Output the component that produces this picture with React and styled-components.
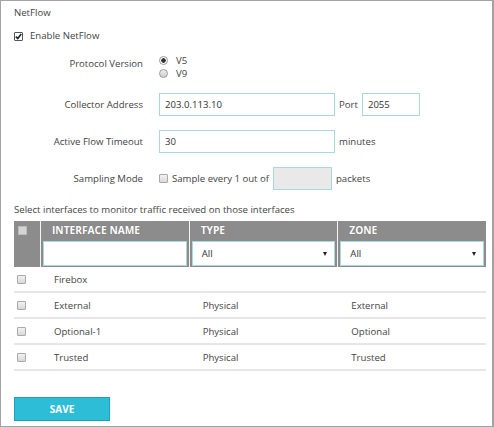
import React from "react"
import styled, { createGlobalStyle } from "styled-components"

const Global = createGlobalStyle`
  html, body { margin: 0; padding: 0; background: #fff; }
  body { font-family: "Open Sans", "Noto Sans", sans-serif; color: #444; }
  * { box-sizing: border-box; }
`

const Frame = styled.div`
  width: 494px;
  height: 427px;
  border: 1px solid #a3a3a3;
  border-right-width: 2px;
  padding: 4px 0 0 13px;
  font-size: 9.6px;
`

const Title = styled.div`
  line-height: 16px;
`

const CheckRow = styled.label`
  display: flex;
  align-items: center;
  gap: 7px;
  margin-top: 7px;
  line-height: 16px;
`

const Box = styled.span`
  width: 9px;
  height: 9px;
  flex: none;
  border: 1px solid ${(p) => (p.$checked ? "#555" : "#a9a9a9")};
  border-radius: 1px;
  background: ${(p) =>
    p.$checked ? "#fff" : "linear-gradient(#f2f2f2, #d8d8d8)"};
  display: flex;
  align-items: center;
  justify-content: center;
`

function Check({ checked }) {
  return (
    <Box $checked={checked}>
      {checked && (
        <svg width="7" height="7" viewBox="0 0 7 7">
          <path d="M0.8 3.6 L2.8 5.6 L6.2 1" fill="none" stroke="#222" strokeWidth="1.6" />
        </svg>
      )}
    </Box>
  )
}

const Field = styled.div`
  display: grid;
  grid-template-columns: 129px auto;
  column-gap: 16px;
  align-items: ${(p) => (p.$top ? "start" : "center")};
  margin-top: ${(p) => p.$mt}px;
`

const Label = styled.div`
  text-align: right;
  line-height: 16px;
  padding-top: ${(p) => (p.$pt ? p.$pt : 0)}px;
`

const Controls = styled.div`
  display: flex;
  align-items: center;
  gap: 4px;
`

const Radios = styled.div`
  display: flex;
  flex-direction: column;
`

const RadioRow = styled.div`
  display: flex;
  align-items: center;
  gap: 8px;
  line-height: 13px;
`

const Radio = styled.span`
  width: 9px;
  height: 9px;
  border-radius: 50%;
  border: 1px solid #9a9a9a;
  background: ${(p) =>
    p.$on
      ? "radial-gradient(circle, #333 0 2px, #fff 2.5px)"
      : "linear-gradient(#eee, #d0d0d0)"};
`

const TextBox = styled.div`
  width: ${(p) => p.$w}px;
  height: 23px;
  border: 1px solid #a7d7df;
  background: ${(p) => (p.$disabled ? "#e9e9e9" : "#fff")};
  padding: 0 0 0 5px;
  display: flex;
  align-items: center;
  color: #333;
`

const Inline = styled.span`
  display: flex;
  align-items: center;
  gap: 4px;
`

const Hint = styled.div`
  line-height: 16px;
  margin-top: 12px;
`

const Table = styled.div`
  margin-top: 3px;
  width: 472px;
`

const Head = styled.div`
  display: grid;
  grid-template-columns: 26px 1fr 1fr 1fr;
  background: #8c8c8c;
  height: 46px;
`

const HeadCell = styled.div`
  border-left: ${(p) => (p.$first ? "none" : "1px solid #f4f4f4")};
  padding: 0 2px 0 2px;
  display: flex;
  flex-direction: column;
`

const HeadTitle = styled.div`
  height: 20px;
  line-height: 18px;
  padding-left: 9px;
  color: #fff;
  font-weight: 700;
  font-size: 10.2px;
  text-shadow: 0 0 1px rgba(0, 0, 0, 0.3);
`

const HeadBox = styled.span`
  margin: 5px 0 0 2px;
  width: 9px;
  height: 9px;
  background: #d4d4d4;
  border: 1px solid #bbb;
`

const Filter = styled.div`
  height: 25px;
  border: 1px solid #a7d7df;
  background: #fff;
  display: flex;
  align-items: center;
  justify-content: space-between;
  padding: 0 7px 0 9px;
  color: #333;
`

const Arrow = styled.span`
  width: 0;
  height: 0;
  border-left: 2.5px solid transparent;
  border-right: 2.5px solid transparent;
  border-top: 4px solid #222;
`

const Row = styled.div`
  display: grid;
  grid-template-columns: 26px 1fr 1fr 1fr;
  height: 26px;
  align-items: center;
  border-bottom: 2px solid #e6e6e6;
`

const Cell = styled.div`
  padding-left: ${(p) => (p.$first ? 3 : 14)}px;
  color: #444;
`

const Save = styled.button`
  margin-top: 26px;
  width: 96px;
  height: 24px;
  background: #2dbdd7;
  border: 1px solid #1aa2bb;
  color: #fff;
  font-family: inherit;
  font-weight: 700;
  font-size: 10px;
  padding: 0;
`

const rows = [
  ["Firebox", "", ""],
  ["External", "Physical", "External"],
  ["Optional-1", "Physical", "Optional"],
  ["Trusted", "Physical", "Trusted"],
]

export default function App() {
  return (
    <>
      <Global />
      <Frame>
        <Title>NetFlow</Title>
        <CheckRow>
          <Check checked />
          Enable NetFlow
        </CheckRow>

        <Field $top $mt={10}>
          <Label $pt={2}>Protocol Version</Label>
          <Radios>
            <RadioRow>
              <Radio $on />
              V5
            </RadioRow>
            <RadioRow>
              <Radio />
              V9
            </RadioRow>
          </Radios>
        </Field>

        <Field $mt={13}>
          <Label>Collector Address</Label>
          <Controls>
            <TextBox $w={176}>203.0.113.10</TextBox>
            Port
            <TextBox $w={58}>2055</TextBox>
          </Controls>
        </Field>

        <Field $mt={14}>
          <Label>Active Flow Timeout</Label>
          <Controls>
            <TextBox $w={176}>30</TextBox>
            minutes
          </Controls>
        </Field>

        <Field $mt={14}>
          <Label>Sampling Mode</Label>
          <Controls>
            <Inline>
              <Check />
              Sample every 1 out of
            </Inline>
            <TextBox $w={59} $disabled />
            packets
          </Controls>
        </Field>

        <Hint>Select interfaces to monitor traffic received on those interfaces</Hint>

        <Table>
          <Head>
            <HeadCell $first>
              <HeadBox />
            </HeadCell>
            <HeadCell>
              <HeadTitle>INTERFACE NAME</HeadTitle>
              <Filter />
            </HeadCell>
            <HeadCell>
              <HeadTitle>TYPE</HeadTitle>
              <Filter>
                All
                <Arrow />
              </Filter>
            </HeadCell>
            <HeadCell>
              <HeadTitle>ZONE</HeadTitle>
              <Filter>
                All
                <Arrow />
              </Filter>
            </HeadCell>
          </Head>
          {rows.map(([name, type, zone]) => (
            <Row key={name}>
              <Cell $first>
                <Check />
              </Cell>
              <Cell>{name}</Cell>
              <Cell>{type}</Cell>
              <Cell>{zone}</Cell>
            </Row>
          ))}
        </Table>

        <Save>SAVE</Save>
      </Frame>
    </>
  )
}
